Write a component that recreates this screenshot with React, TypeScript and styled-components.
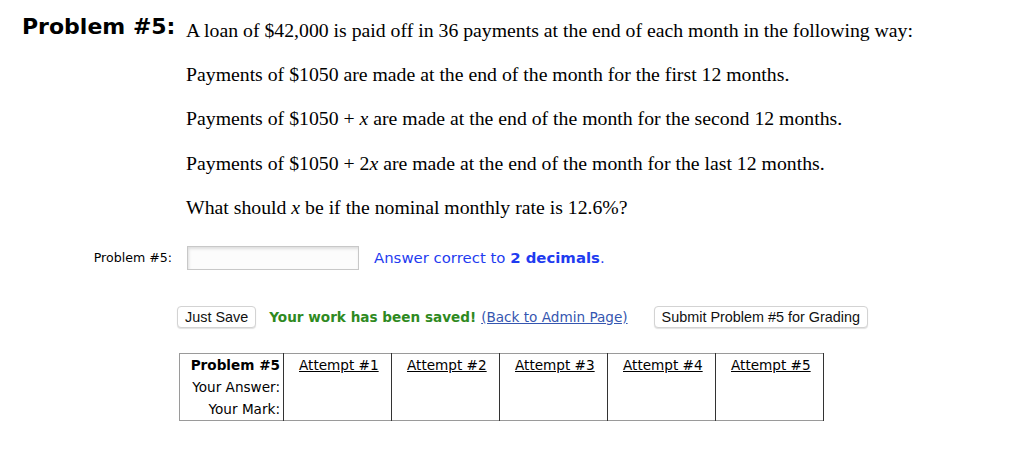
import React from 'react';
import styled, { createGlobalStyle } from 'styled-components';

const GlobalStyle = createGlobalStyle`
	body {
		margin: 0;
		background: #ffffff;
		font-family: 'DejaVu Sans', Verdana, sans-serif;
		color: #000000;
	}
`;

const Page = styled.div`
	padding: 12px 0 0 22px;
	width: 1002px;
`;

const ProblemGrid = styled.div`
	display: grid;
	grid-template-columns: 154px 1fr;
	column-gap: 10px;
	align-items: start;
`;

const Title = styled.div`
	font-family: 'DejaVu Sans', Verdana, sans-serif;
	font-weight: bold;
	font-size: 22px;
	line-height: 30px;
	white-space: nowrap;
`;

const Statement = styled.div`
	font-family: 'Liberation Serif', 'Times New Roman', serif;
	font-size: 19.75px;
	line-height: 36px;
`;

const Line = styled.p`
	margin: 8.2px 0 0;
	font-family: 'Liberation Serif', 'Times New Roman', serif;
	font-size: 19.75px;
	line-height: 36px;
	grid-column: 2;
`;

const Var = styled.i``;

const AnswerRow = styled.div`
	display: grid;
	grid-template-columns: 150px 172px auto;
	column-gap: 15px;
	align-items: center;
	margin-top: 21px;
`;

const AnswerLabel = styled.label`
	font-size: 12.6px;
	text-align: right;
`;

const AnswerInput = styled.input`
	width: 172px;
	height: 24px;
	box-sizing: border-box;
	border: 1px solid #c8c8c8;
	box-shadow: inset 1px 2px 3px rgba(0, 0, 0, 0.12);
	background: #fcfcfc;
	outline: none;
`;

const Hint = styled.span`
	color: #1f3cf0;
	font-size: 14.9px;
	b {
		font-weight: bold;
	}
`;

const ActionRow = styled.div`
	display: flex;
	align-items: center;
	margin-top: 36px;
	margin-left: 155px;
	gap: 13px;
`;

const Button = styled.button<{ $gap?: number }>`
	font-family: 'Liberation Sans', Arial, sans-serif;
	font-size: 14.4px;
	color: #111;
	background: #ffffff;
	border: 1px solid #d3d3d3;
	border-radius: 4px;
	height: 22px;
	padding: 0 7px;
	box-shadow: 0 1px 1px rgba(0, 0, 0, 0.12);
	margin-left: ${(p) => p.$gap ?? 0}px;
`;

const Saved = styled.span`
	font-size: 13.6px;
	font-weight: bold;
	color: #2f8a1f;
`;

const AdminLink = styled.a`
	font-size: 13.6px;
	color: #3556b0;
	text-decoration: underline;
	margin-left: -8px;
`;

const AttemptTable = styled.table`
	margin-top: 25px;
	margin-left: 157px;
	border-collapse: collapse;
	border: 1px solid #9a9a9a;
	font-size: 13.6px;
	td {
		height: 22px;
		line-height: 16px;
		padding-top: 0;
		padding-bottom: 0;
		border-right: 1px solid #333;
	}
`;

const HeadCell = styled.td<{ $bold?: boolean }>`
	font-weight: ${(p) => (p.$bold ? 'bold' : 'normal')};
	text-align: right;
	padding: 0 3px 0 8px;
	width: 92px;
	white-space: nowrap;
`;

const AttemptCell = styled.td`
	width: 108px;
	padding: 0 0 0 15px;
	box-sizing: border-box;
	vertical-align: middle;
	u {
		text-decoration: underline;
	}
`;

const BlankCell = styled.td``;

const attempts = [1, 2, 3, 4, 5];

export default function App() {
	return (
		<>
			<GlobalStyle />
			<Page>
				<ProblemGrid>
					<Title>Problem #5:</Title>
					<Statement>
						A loan of $42,000 is paid off in 36 payments at the end of each month in the following way:
					</Statement>
					<Line>Payments of $1050 are made at the end of the month for the first 12 months.</Line>
					<Line>
						Payments of $1050 + <Var>x</Var> are made at the end of the month for the second 12 months.
					</Line>
					<Line>
						Payments of $1050 + 2<Var>x</Var> are made at the end of the month for the last 12 months.
					</Line>
					<Line>
						What should <Var>x</Var> be if the nominal monthly rate is 12.6%?
					</Line>
				</ProblemGrid>
				<AnswerRow>
					<AnswerLabel>Problem #5:</AnswerLabel>
					<AnswerInput type="text" />
					<Hint>
						Answer correct to <b>2 decimals</b>.
					</Hint>
				</AnswerRow>
				<ActionRow>
					<Button>Just Save</Button>
					<Saved>Your work has been saved!</Saved>
					<AdminLink href="#">(Back to Admin Page)</AdminLink>
					<Button $gap={13}>Submit Problem #5 for Grading</Button>
				</ActionRow>
				<AttemptTable>
					<tbody>
						<tr>
							<HeadCell $bold>Problem #5</HeadCell>
							{attempts.map((n) => (
								<AttemptCell key={n}>
									<u>Attempt #{n}</u>
								</AttemptCell>
							))}
						</tr>
						<tr>
							<HeadCell>Your Answer:</HeadCell>
							{attempts.map((n) => (
								<BlankCell key={n} />
							))}
						</tr>
						<tr>
							<HeadCell>Your Mark:</HeadCell>
							{attempts.map((n) => (
								<BlankCell key={n} />
							))}
						</tr>
					</tbody>
				</AttemptTable>
			</Page>
		</>
	);
}
